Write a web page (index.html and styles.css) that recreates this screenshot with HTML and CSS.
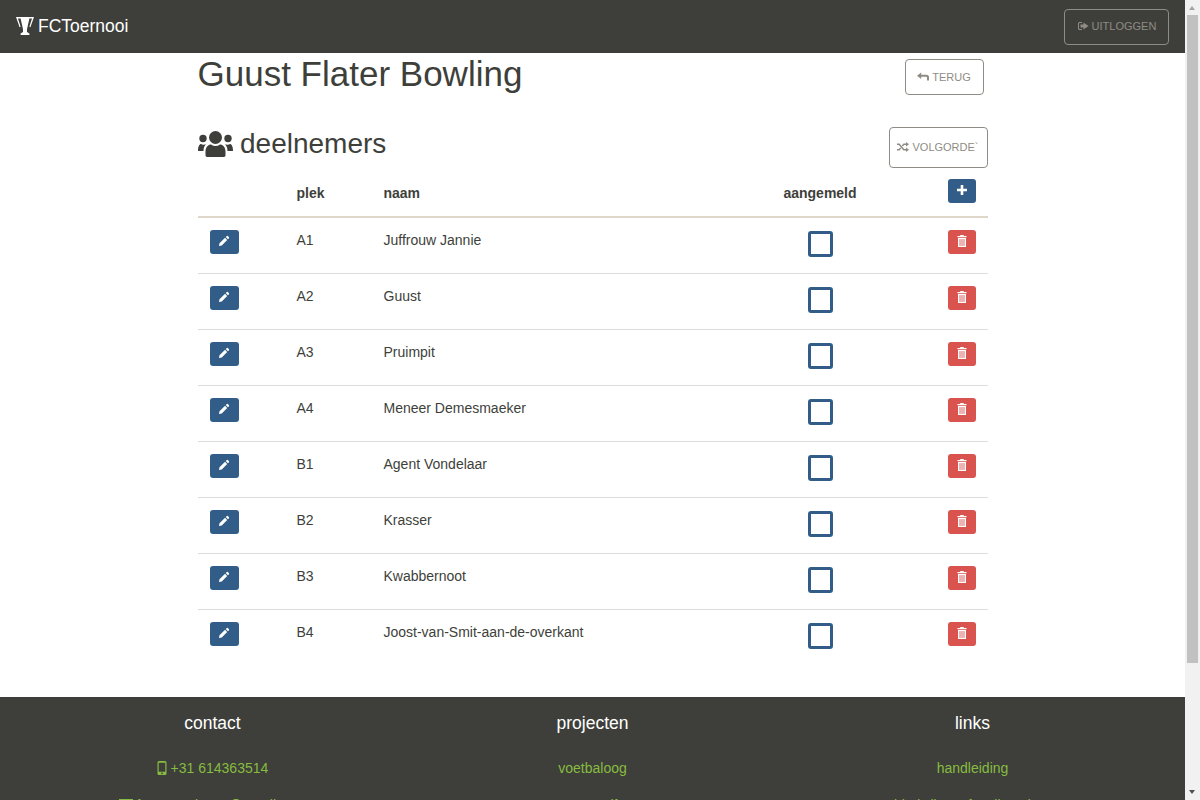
FILE: index.html
```html
<!DOCTYPE html>
<html>
<head>
  <meta charset="utf-8">
  <title>FCToernooi</title>
  <link rel="stylesheet" href="styles.css">
</head>

<body>
  <nav class="navbar">
    <a class="brand" href="#">
      <svg class="brand-icon" viewBox="1 1 18 18"><path fill="#fff" d="M1 1h18l-3.600 10.200-1-.4L17 2.400h-2.600L12 13.200V16l2.400 1.400V19H5.600v-1.600L8 16v-2.800L5.600 2.400H3l2.600 8.400-1 .4z"/></svg>
      <span>FCToernooi</span>
    </a>
    <a class="btn btn-dark" href="#">
      <svg class="icon" viewBox="0 0 12 12"><path fill="currentColor" d="M5 2H2.500A1.500 1.500 0 0 0 1 3.500v5A1.500 1.500 0 0 0 2.500 10H5V9H3a1 1 0 0 1-1-1V4a1 1 0 0 1 1-1h2zM6.500 2.500V4.500H3.500v3h3v2L11.500 6z"/></svg>
      Uitloggen
    </a>
  </nav>

  <main class="content">
    <div class="title-row">
      <h1>Guust Flater Bowling</h1>
      <a class="btn btn-back" href="#">
        <svg class="icon" viewBox="0 0 12 12"><path fill="currentColor" d="M0 4.800l4.200-3.300v2.300h5.300A2.500 2.500 0 0 1 12 6.300V9.500H10V6.800a1 1 0 0 0-1-1H4.200v2.300z"/></svg>
        Terug
      </a>
    </div>

    <div class="section-row">
      <h2>
        <svg class="users-icon" viewBox="0 0 35 26"><g fill="#3e3f3a"><circle cx="17.500" cy="6.500" r="6.500"/><circle cx="5" cy="7.500" r="3.700"/><circle cx="30" cy="7.500" r="3.700"/><path d="M7.500 24.500v-4c0-4.500 3-7 5.500-7 1.500 1 3 1.500 4.500 1.500s3-.5 4.500-1.500c2.500 0 5.500 2.500 5.500 7v4c0 .8-1 1.500-2 1.500H9.500c-1 0-2-.7-2-1.500z"/><path d="M0 19.500c0-4 1.500-6.500 3-6.500 1 .8 3.500 1 5 .3-1.500 1.500-2.500 3.500-2.500 6.700H1c-.5 0-1-.1-1-.5z"/><path d="M35 19.500c0-4-1.500-6.500-3-6.500-1 .8-3.500 1-5 .3 1.500 1.500 2.500 3.500 2.500 6.700H34c.5 0 1-.1 1-.5z"/></g></svg>
        deelnemers
      </h2>
      <a class="btn btn-order" href="#">
        <svg class="icon" viewBox="0 0 12 12"><path fill="currentColor" d="M0 2.500h2.500L7.200 8H9V6.500L12 8.700 9 11V9.500H6.500L1.800 4H0zM0 8h1.800l1.300-1.500 1 1.100L2.500 9.500H0zM6.500 2.500H9V1l3 2.200L9 5.500V4H7.200L5.900 5.500l-1-1.100z"/></svg>
        Volgorde`
      </a>
    </div>

    <table class="players">
      <thead>
        <tr>
          <th class="col-edit"></th>
          <th class="col-place">plek</th>
          <th class="col-name">naam</th>
          <th class="col-check">aangemeld</th>
          <th class="col-del">
            <a class="btn-sm btn-blue" href="#"><svg class="icon-sm" viewBox="0 0 12 12"><path fill="#fff" d="M4.700 1h2.600v3.700H11v2.600H7.300V11H4.700V7.300H1V4.700h3.700z"/></svg></a>
          </th>
        </tr>
      </thead>
      <tbody id="rows"></tbody>
    </table>
  </main>

  <footer class="footer">
    <div class="footer-col">
      <h4>contact</h4>
      <p><a href="#"><svg class="phone-icon" viewBox="0 0 10 14"><path fill="currentColor" fill-rule="evenodd" d="M2 0h6a1.500 1.500 0 0 1 1.500 1.500v11A1.500 1.500 0 0 1 8 14H2a1.500 1.500 0 0 1-1.500-1.500v-11A1.500 1.500 0 0 1 2 0zM1.700 1.800v9h6.600v-9zM5 11.400a.9.900 0 1 0 0 1.800.9.900 0 0 0 0-1.800z"/></svg> +31 614363514</a></p>
      <p><a href="#"><svg class="mail-icon" viewBox="0 0 14 10"><path fill="currentColor" d="M0 0h14v1.500L7 6 0 1.500zM0 3l7 4.500L14 3v7H0z"/></svg> fctoernooicoen@gmail.com</a></p>
    </div>
    <div class="footer-col">
      <h4>projecten</h4>
      <p><a href="#">voetbaloog</a></p>
      <p><a href="#">superelf</a></p>
    </div>
    <div class="footer-col">
      <h4>links</h4>
      <p><a href="#">handleiding</a></p>
      <p><a href="#">bladwijzer afspelingsduur</a></p>
    </div>
  </footer>

  <aside class="scrollbar">
    <span class="arrow-up"></span>
    <span class="thumb"></span>
    <span class="arrow-down"></span>
  </aside>

  <script>
    var players = [
      ["A1", "Juffrouw Jannie"],
      ["A2", "Guust"],
      ["A3", "Pruimpit"],
      ["A4", "Meneer Demesmaeker"],
      ["B1", "Agent Vondelaar"],
      ["B2", "Krasser"],
      ["B3", "Kwabbernoot"],
      ["B4", "Joost-van-Smit-aan-de-overkant"]
    ];

    var pencil = '<svg class="icon-sm" viewBox="0 0 12 12"><path fill="#fff" d="M8.600 1.200a1 1 0 0 1 1.400 0l.8.8a1 1 0 0 1 0 1.400l-.9.9-2.200-2.200zM7 2.800L9.200 5l-5.500 5.500L1 11l.5-2.700z"/></svg>';
    var trash = '<svg class="icon-sm" viewBox="0 0 12 12"><path fill="#fff" fill-rule="evenodd" d="M4.500 0h3l.5 1h2.500v1.300h-9V1H4zM2 3h8v9H2zM3.300 4.200v6.600h5.400V4.200z"/><path fill="#fff" opacity=".55" d="M3.300 4.200h5.400v6.600H3.300z"/></svg>';

    var html = "";
    for (var i = 0; i < players.length; i++) {
      html += '<tr>' +
        '<td><a class="btn-sm btn-blue btn-edit" href="#">' + pencil + '</a></td>' +
        '<td>' + players[i][0] + '</td>' +
        '<td>' + players[i][1] + '</td>' +
        '<td class="cell-check"><span class="checkbox"></span></td>' +
        '<td><a class="btn-sm btn-red" href="#">' + trash + '</a></td>' +
        '</tr>';
    }
    document.getElementById("rows").innerHTML = html;
  </script>
</body>
</html>
```

FILE: styles.css
```css
html {
  overflow: hidden;
}

body {
  font-family: "Liberation Sans", Arial, sans-serif;
  font-size: 14px;
  line-height: 20px;
  color: #3e3f3a;
  background-color: #fff;
  margin: 0;
  padding: 0 15px 0 0;
}

a {
  text-decoration: none;
}

.navbar {
  height: 53px;
  background-color: #3e3f3a;
  display: flex;
  justify-content: space-between;
  align-items: center;
  padding: 0 16px;
  box-sizing: border-box;
}

.brand {
  display: flex;
  align-items: center;
  gap: 4px;
  color: #fff;
  font-size: 17.5px;
  padding-bottom: 2px;
}

.brand-icon {
  width: 18px;
  height: 18px;
}

.btn {
  display: inline-flex;
  align-items: center;
  justify-content: center;
  gap: 3px;
  box-sizing: border-box;
  border: 1px solid #8e8c84;
  border-radius: 4px;
  color: #8e8c84;
  font-size: 11px;
  text-transform: uppercase;
}

.btn-dark {
  width: 105px;
  height: 36px;
  padding-bottom: 2px;
}

.btn-back {
  width: 79px;
  height: 36px;
  margin-top: 6px;
}

.btn-order {
  width: 99px;
  height: 41px;
  padding-bottom: 2px;
}

.icon {
  width: 12px;
  height: 12px;
}

.icon-sm {
  width: 12px;
  height: 12px;
  display: block;
}

.content {
  width: 790px;
  margin: 0 auto;
  padding-bottom: 32px;
}

.title-row {
  display: flex;
  justify-content: space-between;
  align-items: flex-start;
  padding-right: 4px;
}

h1 {
  font-size: 35px;
  font-weight: 400;
  line-height: 42px;
  margin: 0;
}

.section-row {
  display: flex;
  justify-content: space-between;
  align-items: flex-start;
  margin-top: 32px;
}

h2 {
  display: flex;
  align-items: center;
  gap: 7.5px;
  font-size: 28px;
  font-weight: 400;
  line-height: 33px;
  margin: 0;
}

.users-icon {
  width: 35px;
  height: 26px;
}

.players {
  width: 790px;
  border-collapse: collapse;
  table-layout: fixed;
}

.players th {
  height: 49px;
  box-sizing: border-box;
  padding: 2px 12px 0;
  text-align: left;
  font-weight: 700;
  border-bottom: 2px solid #dfd7ca;
}

.players td {
  height: 56px;
  box-sizing: border-box;
  padding: 12px;
  vertical-align: top;
  border-bottom: 1px solid #ddd;
}

.players tr:last-child td {
  border-bottom: none;
}

.col-edit {
  width: 87px;
}

.col-place {
  width: 87px;
}

.col-check {
  width: 231px;
}

.col-del {
  width: 52px;
}

.players th.col-check {
  text-align: center;
}

.players th.col-del {
  padding-bottom: 4px;
}

.cell-check {
  text-align: center;
}

.checkbox {
  display: inline-block;
  width: 25px;
  height: 26px;
  box-sizing: border-box;
  border: 3px solid #325d88;
  border-radius: 3px;
  background-color: #fff;
  vertical-align: top;
  margin-top: 1px;
}

.btn-sm {
  display: flex;
  align-items: center;
  justify-content: center;
  width: 28px;
  height: 24px;
  border-radius: 3px;
  padding-bottom: 2px;
  box-sizing: border-box;
}

.btn-edit {
  width: 29px;
}

.btn-blue {
  background-color: #325d88;
}

.btn-red {
  background-color: #d9534f;
}

.footer {
  background-color: #3e3f3a;
  color: #fff;
  display: grid;
  grid-template-columns: repeat(3, 380px);
  justify-content: center;
  height: 253px;
  text-align: center;
}

.footer-col h4 {
  font-size: 17.5px;
  font-weight: 400;
  line-height: 20px;
  margin: 16px 0 25px;
}

.footer-col p {
  font-size: 14px;
  line-height: 20px;
  margin: 0 0 17px;
}

.footer-col a {
  color: #86bc40;
}

.phone-icon {
  width: 10px;
  height: 14px;
  vertical-align: -2px;
}

.mail-icon {
  width: 14px;
  height: 10px;
  vertical-align: 1px;
}

/* the window's own scrollbar, drawn over the page */
.scrollbar {
  position: fixed;
  top: 0;
  right: 0;
  bottom: 0;
  width: 15px;
  background-color: #f1f1f1;
}

.thumb {
  position: absolute;
  top: 15px;
  left: 2px;
  width: 11px;
  height: 648px;
  background-color: #c1c1c1;
}

.arrow-up,
.arrow-down {
  position: absolute;
  left: 4px;
  width: 0;
  height: 0;
  border-left: 3.5px solid transparent;
  border-right: 3.5px solid transparent;
}

.arrow-up {
  top: 6px;
  border-bottom: 4px solid #a3a3a3;
}

.arrow-down {
  bottom: 6px;
  border-top: 4px solid #505050;
}
```
